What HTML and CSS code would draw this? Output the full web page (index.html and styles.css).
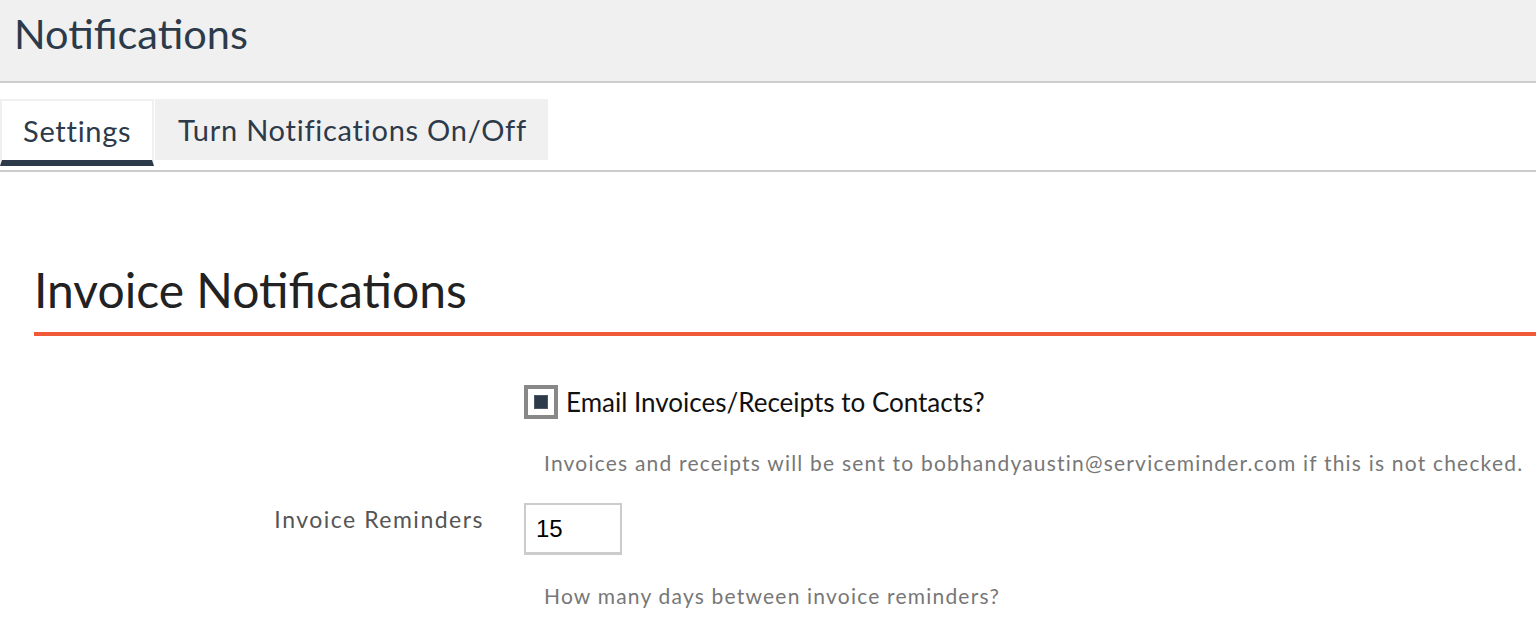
FILE: index.html
```html
<!DOCTYPE html>
<html lang="en">
<head>
<meta charset="utf-8">
<title>Notifications</title>
<link rel="stylesheet" href="styles.css">
</head>
<body>
<header class="page-header">
  <h1 class="page-title">Notifications</h1>
</header>
<nav class="tabs">
  <a class="tab tab-active">Settings</a>
  <a class="tab">Turn Notifications On/Off</a>
</nav>
<main class="content">
  <h2 class="section-title">Invoice Notifications</h2>
  <div class="form">
    <div class="row">
      <div class="row-label"></div>
      <div class="row-field">
        <label class="check">
          <span class="check-box"><span class="check-mark"></span></span>
          <span class="check-text">Email Invoices/Receipts to Contacts?</span>
        </label>
        <p class="help">Invoices and receipts will be sent to bobhandyaustin@serviceminder.com if this is not checked.</p>
      </div>
    </div>
    <div class="row">
      <div class="row-label">Invoice Reminders</div>
      <div class="row-field">
        <input class="text-input" type="text" value="15">
        <p class="help help-tight">How many days between invoice reminders?</p>
      </div>
    </div>
  </div>
</main>
</body>
</html>
```
FILE: styles.css
```css
* { box-sizing: border-box; }
html, body { margin: 0; padding: 0; }
body {
  font-family: Lato, "Noto Sans", sans-serif;
  background: #fff;
  color: #2c3a4a;
  overflow: hidden;
}
.page-header {
  background: #f0f0f0;
  height: 83px;
  border-bottom: 2px solid #cccccc;
  padding: 0 14px;
  display: flex;
  align-items: center;
}
.page-title {
  margin: 0;
  font-weight: 400;
  font-size: 41.5px;
  color: #2c3a4a;
  position: relative;
  top: -8px;
}
.tabs {
  display: flex;
  margin-top: 16px;
  padding-bottom: 4px;
  border-bottom: 2px solid #cccccc;
  align-items: flex-start;
}
.tab {
  display: flex;
  align-items: center;
  height: 61px;
  padding: 0 21px 0 23px;
  font-size: 29px;
  letter-spacing: 0.75px;
  color: #2c3a4a;
  background: #f0f0f0;
}
.tab-active {
  background: #fff;
  border: 2px solid #f0f0f0;
  border-bottom: 6px solid #2c3a4a;
  height: 67px;
  width: 154px;
  margin-right: 1px;
  padding-left: 21px;
}
.content {
  padding-left: 34px;
}
.section-title {
  margin: 88px 0 0 0;
  font-weight: 400;
  font-size: 48px;
  color: #222;
  line-height: 60px;
  padding-bottom: 12px;
  border-bottom: 4px solid #f05a38;
}
.form {
  padding-top: 49px;
}
.row {
  display: flex;
  gap: 40px;
}
.row-label {
  width: 450px;
  text-align: right;
  font-size: 23px;
  letter-spacing: 1.5px;
  color: #555;
  padding-top: 2px;
}
.row-field {
  flex: 1;
}
.check {
  display: flex;
  align-items: center;
  gap: 8px;
}
.check-box {
  width: 34px;
  height: 34px;
  border: 4px solid #888;
  display: flex;
  align-items: center;
  justify-content: center;
  background: #fff;
}
.check-mark {
  width: 14px;
  height: 14px;
  background: #2c3a4a;
  border: 1px solid #4a5868;
}
.check-text {
  font-size: 26px;
  color: #111;
}
.help {
  margin: 31px 0 28px 20px;
  font-size: 21px;
  letter-spacing: 1.2px;
  color: #777;
}
.help-tight {
  margin-top: 28px;
}
.text-input {
  width: 98px;
  height: 52px;
  border: 2px solid #cccccc;
  border-bottom-width: 3px;
  font-family: "Liberation Sans", Arial, sans-serif;
  font-size: 24px;
  padding: 0 10px;
  color: #000;
  outline: none;
}
```
